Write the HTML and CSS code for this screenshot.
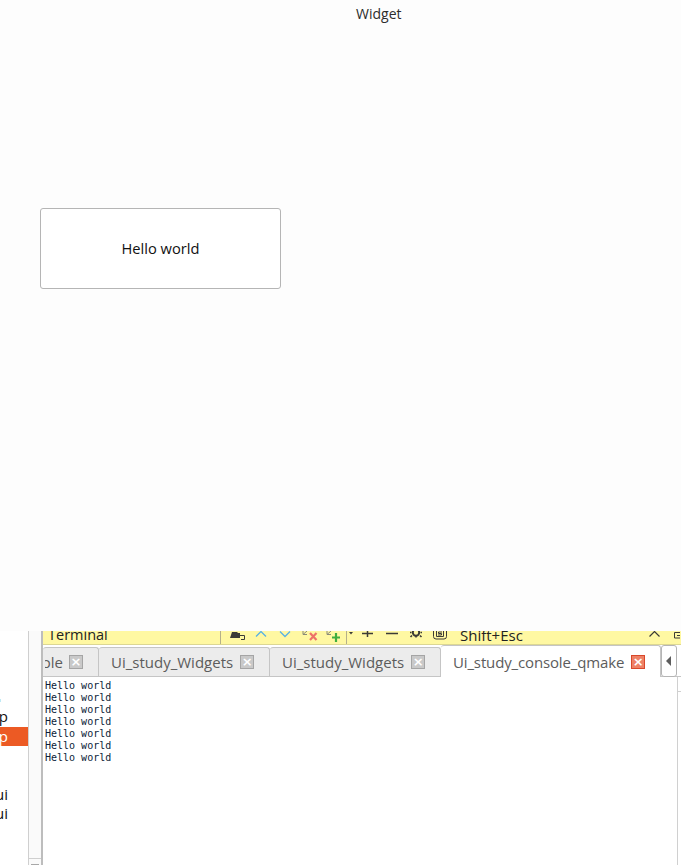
FILE: index.html
```html
<!DOCTYPE html>
<html lang="en">
<head>
<meta charset="utf-8">
<title>Widget</title>
<link rel="stylesheet" href="styles.css">
</head>
<body>
<main class="window">
  <header class="titlebar">Widget</header>
  <button class="hello" type="button">Hello world</button>
</main>
<section class="desktop">
  <aside class="tree">
    <div class="tree-dot"></div>
    <div class="tree-row raised">p</div>
    <div class="tree-row selected">p</div>
    <div class="tree-row low">ui</div>
    <div class="tree-row">ui</div>
  </aside>
  <div class="strip"><div class="strip-foot"><span class="strip-thumb"></span></div></div>
  <div class="ide">
    <div class="toolbar">
      <span class="term">Terminal</span>
      <span class="sep"></span>
      <svg class="ico i-folder" width="15" height="13" viewBox="0 0 15 13"><path d="M2 1h5l1 1h2v5H0z" fill="#3c3b37"/><path d="M10 4.500h4.500v4H11" fill="none" stroke="#3c3b37"/></svg>
      <svg class="ico i-up" width="12" height="13" viewBox="0 0 12 13"><path d="M1 5.500l5-5 5 5" fill="none" stroke="#58b1e4" stroke-width="1.300"/></svg>
      <svg class="ico i-down" width="12" height="13" viewBox="0 0 12 13"><path d="M1 0.500l5 5 5-5" fill="none" stroke="#58b1e4" stroke-width="1.300"/></svg>
      <svg class="ico i-x" width="16" height="13" viewBox="0 0 16 13"><path d="M1 0v3.500h4M1 3.500L5 0" fill="none" stroke="#8a8a7a"/><path d="M8 2l6.500 7M14.500 2L8 9" stroke="#ee7268" stroke-width="2.200"/></svg>
      <svg class="ico i-plus" width="16" height="13" viewBox="0 0 16 13"><path d="M1 0v3.500h4M1 3.500L5 0" fill="none" stroke="#8a8a7a"/><path d="M10 2v9M6 6.500h8" stroke="#3fae3f" stroke-width="2.200"/></svg>
      <span class="sep i-sep2"></span>
      <svg class="ico i-arrow" width="4" height="13" viewBox="0 0 4 13"><path d="M0 1h4L2 3.500z" fill="#3c3b37"/></svg>
      <svg class="ico i-add" width="13" height="13" viewBox="0 0 13 13"><path d="M5.500 0v6M0 2.500h11" stroke="#3c3b37" stroke-width="1.500"/></svg>
      <svg class="ico i-minus" width="13" height="13" viewBox="0 0 13 13"><path d="M0 2.500h12" stroke="#3c3b37" stroke-width="1.500"/></svg>
      <svg class="ico i-gear" width="13" height="13" viewBox="0 0 13 13"><circle cx="6" cy="1.500" r="3.200" fill="none" stroke="#3c3b37" stroke-width="2"/><path d="M6 4v2.500M2 4.500L.5 6M10 4.500L11.500 6M1.500 1.500H0M10.500 1.500H12" stroke="#3c3b37" stroke-width="1.600"/></svg>
      <svg class="ico i-box" width="14" height="13" viewBox="0 0 14 13"><path d="M.5 0v5.500a2.500 2.500 0 0 0 2.500 2.500h8a2.500 2.500 0 0 0 2.500-2.500V0" fill="none" stroke="#3c3b37"/><path d="M3.500 0v5.500h7V0" fill="none" stroke="#3c3b37"/><path d="M9 1H5.500v1.500H8.500V4H5" fill="none" stroke="#3c3b37"/></svg>
      <span class="shortcut">Shift+Esc</span>
      <svg class="ico i-chev" width="12" height="13" viewBox="0 0 12 13"><path d="M.5 5.500L5.500.5l5 5" fill="none" stroke="#3c3b37" stroke-width="1.200"/></svg>
      <svg class="ico i-last" width="6" height="13" viewBox="0 0 6 13"><path d="M6 1.500H.5v5.500H6M3 4.500h3" fill="none" stroke="#3c3b37"/></svg>
    </div>
    <div class="tabs">
      <div class="tab cut"><span class="tab-clip">ole</span><span class="close">×</span></div>
      <div class="tab"><span>Ui_study_Widgets</span><span class="close">×</span></div>
      <div class="tab"><span>Ui_study_Widgets</span><span class="close">×</span></div>
      <div class="tab active"><span>Ui_study_console_qmake</span><span class="close red">×</span></div>
      <div class="scroll-btn"><svg width="6" height="10" viewBox="0 0 6 10"><path d="M5 0v10L0 5z" fill="#5d5d5d"/></svg></div>
    </div>
    <div class="console-row">
      <pre class="console">Hello world
Hello world
Hello world
Hello world
Hello world
Hello world
Hello world</pre>
      <div class="overview"><div class="overview-top"></div></div>
    </div>
  </div>
</section>
</body>
</html>
```
FILE: styles.css
```css
* { box-sizing: border-box; }
html, body { margin: 0; height: 100%; }
body { width: 681px; height: 865px; overflow: hidden; background: #fff; display: flex; flex-direction: column; font-family: "Open Sans", "Noto Sans", sans-serif; }
.window { height: 631px; flex: none; background: #fdfdfd; display: flex; flex-direction: column; align-items: flex-start; }
.titlebar { width: 100%; height: 208px; padding: 5px 0 0 356px; font-size: 14px; line-height: 17px; color: #2c2c2c; }
.hello { width: 241px; height: 81px; margin-left: 40px; padding: 0 0 2px; background: #fff; border: 1px solid #b5b5b5; border-radius: 3px; font: inherit; font-size: 14.700px; color: #111; }

.desktop { flex: 1; display: flex; min-height: 0; }
.tree { width: 28px; flex: none; background: #fff; padding-top: 68px; font-size: 15px; color: #111; }
.tree-dot { width: 1px; height: 3px; margin-bottom: 6px; background: #bfeaf5; }
.tree-row { height: 19px; line-height: 19px; display: flex; justify-content: flex-end; padding-right: 20px; }
.tree-row.raised { line-height: 17px; }
.tree-row.selected { background: #ec5a24; color: #fff; }
.tree-row.low { margin-top: 39px; }

.strip { width: 15px; flex: none; display: flex; flex-direction: column; justify-content: flex-end; background: #fafafa; border-left: 1px solid #cfcfcf; border-right: 2px solid #bdbdbd; }
.strip-foot { height: 7px; padding: 5px 0 0 2px; border-top: 1px solid #cfcfcf; }
.strip-thumb { display: block; width: 8px; height: 1px; background: #a8a8a8; }

.ide { flex: 1; min-width: 0; display: flex; flex-direction: column; }
.toolbar { height: 14px; flex: none; background: #fff8a2; border-bottom: 1px solid #dcd793; display: flex; align-items: flex-start; overflow: hidden; }
.term { width: 177px; flex: none; margin-top: -6px; padding-left: 5px; font-size: 14.500px; line-height: 20px; color: #222; }
.sep { width: 1px; height: 13px; background: #b5b08a; flex: none; }
.ico { flex: none; display: block; }
.i-folder { margin-left: 9px; }
.i-up { margin-left: 10px; }
.i-down { margin-left: 12px; }
.i-x { margin-left: 11px; }
.i-plus { margin-left: 8px; }
.i-sep2 { margin-left: 4px; }
.i-arrow { margin-left: 2px; }
.i-add { margin-left: 9px; }
.i-minus { margin-left: 11px; }
.i-gear { margin-left: 11px; }
.i-box { margin-left: 10px; }
.shortcut { width: 190px; flex: none; margin-left: 12px; margin-top: -6px; padding-left: 1px; font-size: 15px; line-height: 20px; color: #222; }
.i-last { margin-left: 13px; }

.tabs { height: 32px; flex: none; display: flex; align-items: flex-end; border-bottom: 1px solid #c5c5c5; background: #fff; }
.tab { height: 29px; width: 171px; flex: none; padding: 0 0 1px 12px; display: flex; align-items: center; gap: 7px; background: #ececec; border: 1px solid #c5c5c5; border-bottom: 0; border-left: 0; border-radius: 3px 3px 0 0; font-size: 15px; color: #5c5c5c; }
.tab.cut { width: 56px; padding: 0 15px 1px 2px; justify-content: flex-end; gap: 6px; }
.tab-clip { width: 18px; flex: none; display: flex; justify-content: flex-end; overflow: hidden; }
.tab.active { width: 220px; height: 32px; margin-bottom: -1px; padding-bottom: 0; background: #fff; letter-spacing: -0.140px; }
.close { width: 14px; height: 14px; flex: none; display: flex; align-items: center; justify-content: center; background: #c9c9c9; border: 1px solid #a5a5a5; color: #fff; font: 700 13px/1 "DejaVu Sans", sans-serif; letter-spacing: 0; }
.close.red { background: #ee8166; border-color: #d9482b; }
.scroll-btn { width: 16px; height: 32px; margin-bottom: -1px; flex: none; display: flex; align-items: center; justify-content: center; background: #fff; border: 1px solid #b5b5b5; border-radius: 3px; }

.console-row { flex: 1; display: flex; min-height: 0; }
.console { flex: 1; margin: 0; padding: 3px 0 0 2px; font: 10px/12px "DejaVu Sans Mono", monospace; color: #0b1d38; background: #fff; }
.overview { width: 4px; flex: none; border-left: 1px solid #d0d0d0; }
.overview-top { height: 15px; border-bottom: 1px solid #d0d0d0; }
```
